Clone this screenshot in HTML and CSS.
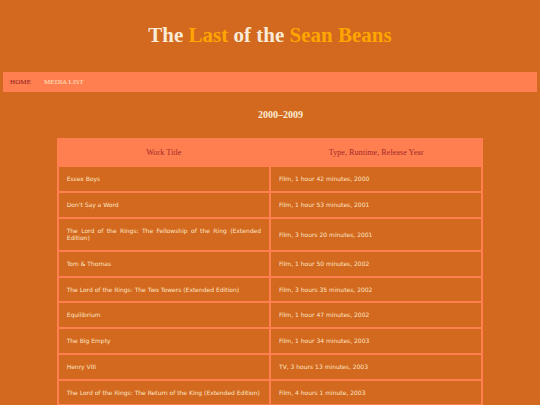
FILE: index.html
```html
<!DOCTYPE html>
<html lang="en">
<head>
<meta charset="utf-8">
<title>The Last of the Sean Beans</title>
<link rel="stylesheet" href="styles.css">
</head>
<body>
<div class="page">
  <h1 class="site-title">The <span class="accent">Last</span> of the <span class="accent">Sean Beans</span></h1>
  <nav class="nav">
    <a class="nav-link current" href="#">HOME</a>
    <a class="nav-link" href="#">MEDIA LIST</a>
  </nav>
  <h2 class="decade">2000–2009</h2>
  <table class="media">
    <colgroup><col class="half"><col class="half"></colgroup>
    <thead>
      <tr><th>Work Title</th><th>Type, Runtime, Release Year</th></tr>
    </thead>
    <tbody>
      <tr><td>Essex Boys</td><td>Film, 1 hour 42 minutes, 2000</td></tr>
      <tr><td>Don't Say a Word</td><td>Film, 1 hour 53 minutes, 2001</td></tr>
      <tr><td>The Lord of the Rings: The Fellowship of the Ring (Extended Edition)</td><td>Film, 3 hours 20 minutes, 2001</td></tr>
      <tr><td>Tom &amp; Thomas</td><td>Film, 1 hour 50 minutes, 2002</td></tr>
      <tr><td>The Lord of the Rings: The Two Towers (Extended Edition)</td><td>Film, 3 hours 35 minutes, 2002</td></tr>
      <tr><td>Equilibrium</td><td>Film, 1 hour 47 minutes, 2002</td></tr>
      <tr><td>The Big Empty</td><td>Film, 1 hour 34 minutes, 2003</td></tr>
      <tr><td>Henry VIII</td><td>TV, 3 hours 13 minutes, 2003</td></tr>
      <tr><td>The Lord of the Rings: The Return of the King (Extended Edition)</td><td>Film, 4 hours 1 minute, 2003</td></tr>
    </tbody>
  </table>
</div>
</body>
</html>
```
FILE: styles.css
```css
html, body {
  margin: 0;
  padding: 0;
  background: #D2691E;
}

.page {
  padding: 0 3.3px;
}

.site-title {
  margin: 22.5px 0 24.6px;
  font-family: "Liberation Serif", "Times New Roman", serif;
  font-size: 21px;
  font-weight: bold;
  text-align: center;
  color: #FAEBD7;
}

.accent {
  color: #FFA500;
}

.nav {
  display: flex;
  align-items: center;
  gap: 13px;
  height: 20.2px;
  padding-left: 6.8px;
  background: #FF7F50;
}

.nav-link {
  font-family: "Liberation Serif", "Times New Roman", serif;
  font-size: 7.1px;
  color: #FFE4C4;
  text-decoration: none;
}

.nav-link.current {
  color: #8B1A1A;
}

.decade {
  margin: 16.7px 0 17.6px;
  padding-left: 21px;
  font-family: "Liberation Serif", "Times New Roman", serif;
  font-size: 10px;
  font-weight: bold;
  text-align: center;
  color: #FAEBD7;
}

.media {
  width: 80%;
  margin: 0 auto;
  table-layout: fixed;
  border-spacing: 2px;
  background: #FF7F50;
}

.half {
  width: 50%;
}

.media th {
  padding: 8px;
  background: #FF7F50;
  font-family: "Liberation Serif", "Times New Roman", serif;
  font-size: 8.2px;
  line-height: 9.7px;
  font-weight: normal;
  color: #A52A2A;
  text-align: center;
}

.media td {
  padding: 8px;
  background: #D2691E;
  font-family: "DejaVu Sans", Verdana, sans-serif;
  font-size: 6px;
  line-height: 7.7px;
  color: #FFE4C4;
  text-align: justify;
  vertical-align: middle;
}
```
